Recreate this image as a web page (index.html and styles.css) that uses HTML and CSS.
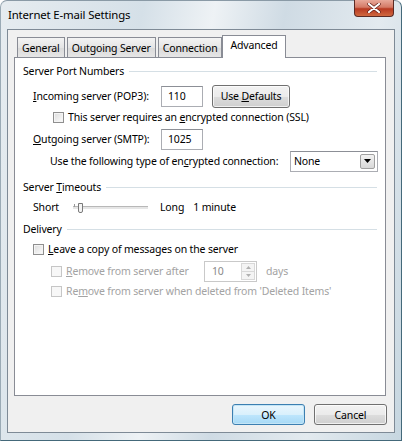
FILE: index.html
```html
<html>

<head>
    <title>Internet E-mail Settings</title>
    <link rel="stylesheet" href="styles.css">
</head>

<body>

    <div class="window">
        <div class="titlebar">
            <span class="title">Internet E-mail Settings</span>
            <div class="close">
                <svg width="14" height="10" viewBox="0 0 14 10">
                    <path d="M2 1 L12 9 M12 1 L2 9" stroke="#5a1a14" stroke-width="3.4" stroke-linecap="round" />
                    <path d="M2 1 L12 9 M12 1 L2 9" stroke="#fff" stroke-width="2.2" stroke-linecap="round" />
                </svg>
            </div>
        </div>

        <div class="client">
            <div class="tabs">
                <div class="tab">General</div>
                <div class="tab">Outgoing Server</div>
                <div class="tab">Connection</div>
                <div class="tab active">Advanced</div>
            </div>

            <div class="panel">
                <div class="group r1">
                    <span>Server Port Numbers</span>
                    <div class="rule"></div>
                </div>

                <div class="row r2 indent1">
                    <label class="lbl-port"><u>I</u>ncoming server (POP3):</label>
                    <div class="textbox port">110</div>
                    <button class="btn defaults">Use <u>D</u>efaults</button>
                </div>

                <div class="row r3 indent2">
                    <span class="check"></span>
                    <span>This server requires an <u>e</u>ncrypted connection (SSL)</span>
                </div>

                <div class="row r4 indent1">
                    <label class="lbl-port"><u>O</u>utgoing server (SMTP):</label>
                    <div class="textbox port">1025</div>
                </div>

                <div class="row r5 indent3">
                    <label class="lbl-enc">Use the following type of en<u>c</u>rypted connection:</label>
                    <div class="combo">
                        <span class="combo-text">None</span>
                        <span class="combo-btn">
                            <svg width="7" height="4" viewBox="0 0 7 4"><path d="M0 0 H7 L3.5 4 Z" fill="#000" /></svg>
                        </span>
                    </div>
                </div>

                <div class="group r6">
                    <span>Server <u>T</u>imeouts</span>
                    <div class="rule"></div>
                </div>

                <div class="row r7 indent1">
                    <span class="lbl-short">Short</span>
                    <div class="slider">
                        <div class="track"></div>
                        <div class="tick"></div>
                        <div class="thumb"></div>
                    </div>
                    <span class="lbl-long">Long</span>
                    <span>1 minute</span>
                </div>

                <div class="group r8">
                    <span>Delivery</span>
                    <div class="rule"></div>
                </div>

                <div class="row r9 indent1">
                    <span class="check"></span>
                    <span><u>L</u>eave a copy of messages on the server</span>
                </div>

                <div class="row r10 indent2b disabled">
                    <span class="check"></span>
                    <span class="lbl-remove"><u>R</u>emove from server after</span>
                    <div class="textbox spin">
                        <span class="spin-val">10</span>
                        <span class="spin-btns">
                            <span class="spin-up"><svg width="5" height="3" viewBox="0 0 5 3"><path d="M0 3 H5 L2.5 0 Z" fill="#b0b0b0" /></svg></span>
                            <span class="spin-down"><svg width="5" height="3" viewBox="0 0 5 3"><path d="M0 0 H5 L2.5 3 Z" fill="#b0b0b0" /></svg></span>
                        </span>
                    </div>
                    <span>days</span>
                </div>

                <div class="row r11 indent2b disabled">
                    <span class="check"></span>
                    <span>Re<u>m</u>ove from server when deleted from 'Deleted Items'</span>
                </div>
            </div>

            <div class="buttons">
                <button class="btn default">OK</button>
                <button class="btn">Cancel</button>
            </div>
        </div>
    </div>

</body>

</html>
```

FILE: styles.css
```css
body {
    margin: 0;
    font-family: "Noto Sans", "DejaVu Sans", sans-serif;
    font-size: 10.5px;
    letter-spacing: -0.15px;
    color: #000;
}

u {
    text-decoration: underline;
    text-underline-offset: 1px;
}

.window {
    width: 402px;
    height: 441px;
    box-sizing: border-box;
    border: 1px solid #44697a;
    border-top-color: #8a9aa6;
    border-left-color: #9aaab5;
    border-radius: 7px 7px 0 0;
    background: linear-gradient(100deg, #e6ecf0 0%, #d5e0e8 30%, #eef2f5 45%, #cfdbe4 60%, #e3eaef 80%, #c6d6e0 100%);
    display: flex;
    flex-direction: column;
}

.titlebar {
    height: 28px;
    display: flex;
    align-items: flex-start;
    justify-content: space-between;
}

.title {
    margin: 6px 0 0 7px;
    font-size: 11.4px;
    color: #000;
}

.close {
    width: 40px;
    height: 17px;
    margin-right: 7px;
    margin-top: -1px;
    box-sizing: border-box;
    border: 1px solid #5b2a24;
    border-top: none;
    border-radius: 0 0 4px 4px;
    background: linear-gradient(#e8a99a 0%, #d47a66 45%, #b83a22 55%, #d0683f 100%);
    display: flex;
    align-items: center;
    justify-content: center;
}

.client {
    margin: 0 6px 7px 6px;
    flex: 1;
    background: #f0f0f0;
    border: 1px solid #7e8a96;
    display: flex;
    flex-direction: column;
}

.tabs {
    display: flex;
    align-items: flex-end;
    margin-left: 9px;
    height: 27px;
    position: relative;
    z-index: 1;
}

.tab {
    height: 19px;
    padding: 0 4px;
    margin-right: 2px;
    border: 1px solid #898c95;
    border-bottom: none;
    background: linear-gradient(#f3f3f3, #e5e5e5 50%, #dadada 51%, #e6e6e6);
    display: flex;
    align-items: center;
    color: #000;
}

.tab.active {
    height: 23px;
    margin-left: -2px;
    margin-bottom: -1px;
    padding: 0 7px;
    background: #fff;
    align-items: flex-start;
    padding-top: 2px;
    box-sizing: border-box;
}

.panel {
    margin: 0 8px 0 6px;
    height: 337px;
    background: #fff;
    border: 1px solid #898c95;
}

.row,
.group {
    display: flex;
    align-items: center;
    white-space: nowrap;
}

.group {
    margin-left: 8px;
    margin-right: 8px;
    height: 20px;
}

.group .rule {
    flex: 1;
    height: 0;
    border-top: 1px solid #d5dfe5;
    margin-left: 5px;
}

.r1 { margin-top: 3px; }
.r2 { margin-top: 3px; height: 24px; }
.r3 { height: 18px; }
.r4 { margin-top: 2px; height: 22px; }
.r5 { height: 22px; }
.r6 { margin-top: 5px; }
.r7 { margin-top: 0; height: 20px; }
.r8 { margin-top: 2px; }
.r9 { margin-top: 1px; height: 18px; }
.r10 { margin-top: 2px; height: 22px; }
.r11 { margin-top: 0; height: 18px; }

.indent1 { padding-left: 18px; }
.indent2 { padding-left: 38px; }
.indent2b { padding-left: 36px; }
.indent3 { padding-left: 35px; }

.lbl-port {
    width: 128px;
}

.textbox {
    box-sizing: border-box;
    height: 21px;
    border: 1px solid #abadb3;
    border-top-color: #8c8f96;
    background: #fff;
    display: flex;
    align-items: center;
    padding-left: 6px;
}

.port {
    width: 42px;
}

.btn {
    font-family: inherit;
    font-size: 10.5px;
    letter-spacing: -0.15px;
    color: #000;
    height: 23px;
    border: 1px solid #707070;
    border-radius: 3px;
    background: linear-gradient(#f2f2f2 0%, #ebebeb 50%, #dddddd 51%, #cfcfcf 100%);
    box-shadow: inset 0 0 0 1px rgba(255, 255, 255, 0.7);
    padding: 0;
}

.defaults {
    width: 78px;
    margin-left: 9px;
}

.check {
    width: 11px;
    height: 11px;
    box-sizing: border-box;
    border: 1px solid #8f8f8f;
    background: linear-gradient(135deg, #dcdcdc, #fcfcfc);
    box-shadow: inset 0 0 0 1px #f4f4f4;
    margin-right: 4px;
    flex: none;
}

.lbl-enc {
    width: 240px;
    flex: none;
}

.combo {
    width: 88px;
    height: 21px;
    box-sizing: border-box;
    border: 1px solid #abadb3;
    border-top-color: #8c8f96;
    background: #fff;
    display: flex;
    align-items: center;
    justify-content: space-between;
}

.combo-text {
    padding-left: 3px;
}

.combo-btn {
    width: 15px;
    height: 15px;
    margin-right: 2px;
    box-sizing: border-box;
    border: 1px solid #a0a0a0;
    border-radius: 2px;
    background: linear-gradient(#f2f2f2, #d8d8d8);
    display: flex;
    align-items: center;
    justify-content: center;
}

.lbl-short {
    width: 40px;
}

.slider {
    position: relative;
    width: 75px;
    height: 14px;
    margin-right: 12px;
}

.track {
    position: absolute;
    left: 0;
    top: 6px;
    width: 75px;
    height: 2px;
    background: #e6e6e6;
    border-top: 1px solid #b8b8b8;
}

.tick {
    position: absolute;
    left: 1px;
    top: 4px;
    width: 4px;
    height: 3px;
    border-left: 1px solid #9a9a9a;
}

.thumb {
    position: absolute;
    left: 5px;
    top: 3px;
    width: 3px;
    height: 8px;
    border: 1px solid #7a7a7a;
    border-radius: 0 0 2px 2px;
    background: #f4f4f4;
}

.lbl-long {
    margin-right: 9px;
}

.disabled {
    color: #a3a3a3;
}

.disabled .check {
    border-color: #c6c6c6;
    background: #f7f7f7;
    box-shadow: none;
}

.lbl-remove {
    width: 138px;
}

.spin {
    width: 53px;
    height: 21px;
    border-color: #c9c9c9;
    padding-left: 0;
    justify-content: space-between;
    margin-right: 9px;
}

.spin-val {
    padding-left: 7px;
    color: #8a8a8a;
}

.spin-btns {
    display: flex;
    flex-direction: column;
    width: 14px;
    height: 17px;
    margin-right: 1px;
}

.spin-up,
.spin-down {
    flex: 1;
    border: 1px solid #d8d8d8;
    background: #f4f4f4;
    display: flex;
    align-items: center;
    justify-content: center;
}

.spin-down {
    border-top: none;
}

.buttons {
    display: flex;
    justify-content: flex-end;
    gap: 9px;
    margin-top: 8px;
    margin-right: 7px;
}

.buttons .btn {
    width: 73px;
    height: 21px;
}

.btn.default {
    border-color: #3c7fb1;
    background: linear-gradient(#eaf6fd 0%, #d9f0fc 50%, #bee6fd 51%, #a7d9f5 100%);
    box-shadow: inset 0 0 0 1px #c4e5f6;
}
```
